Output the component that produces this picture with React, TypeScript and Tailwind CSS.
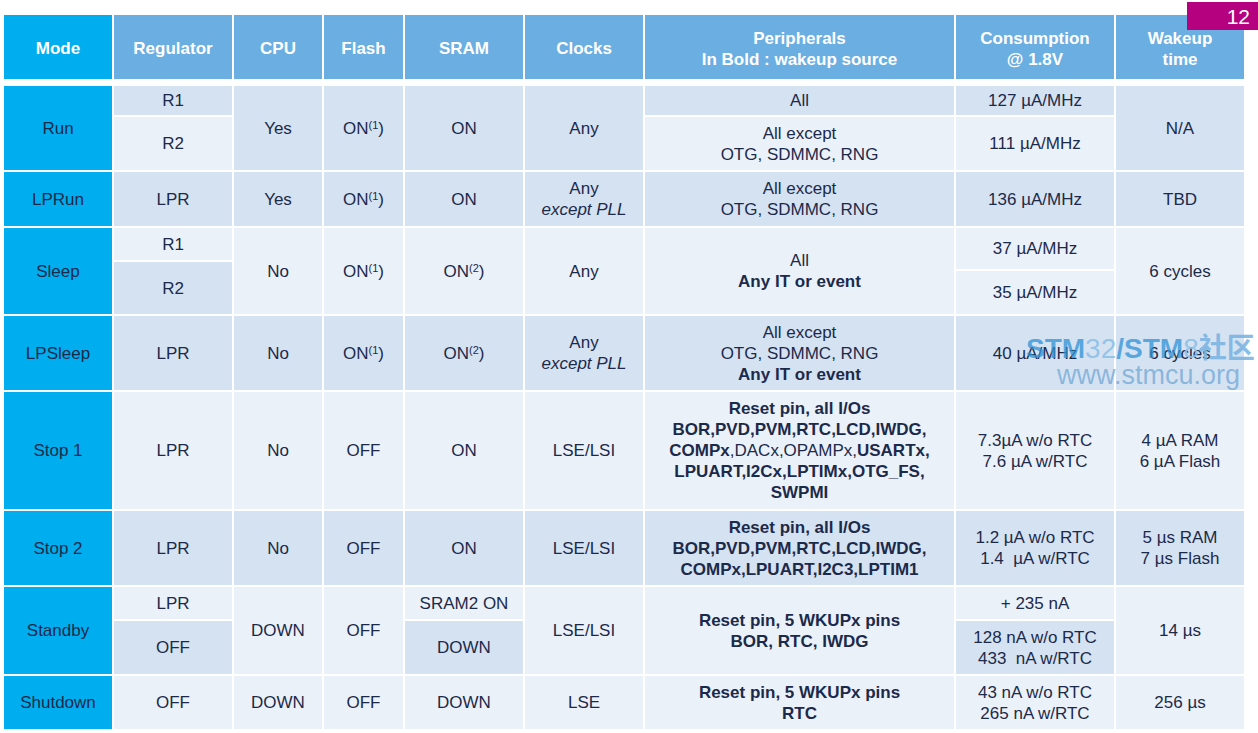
import * as React from "react";

const D = "bg-[#d5e2f2]";
const L = "bg-[#ebf1f9]";
const M = "bg-[#00adef]";

type Cell = { pos: string; bg: string; content: React.ReactNode };

const On = ({ n }: { n: string }) => (
  <span>
    ON<sup className="text-[11px] -top-[0.45em]">({n}</sup>)
  </span>
);

const Lines = ({ children }: { children: React.ReactNode }) => (
  <div className="flex flex-col items-center">{children}</div>
);

const cells: Cell[] = [
  // Mode
  { pos: "col-start-1 row-start-1 row-span-2", bg: M, content: "Run" },
  { pos: "col-start-1 row-start-3", bg: M, content: "LPRun" },
  { pos: "col-start-1 row-start-4 row-span-3", bg: M, content: "Sleep" },
  { pos: "col-start-1 row-start-7", bg: M, content: "LPSleep" },
  { pos: "col-start-1 row-start-8", bg: M, content: "Stop 1" },
  { pos: "col-start-1 row-start-9", bg: M, content: "Stop 2" },
  { pos: "col-start-1 row-start-10 row-span-2", bg: M, content: "Standby" },
  { pos: "col-start-1 row-start-12", bg: M, content: "Shutdown" },

  // Regulator
  { pos: "col-start-2 row-start-1", bg: D, content: "R1" },
  { pos: "col-start-2 row-start-2", bg: L, content: "R2" },
  { pos: "col-start-2 row-start-3", bg: D, content: "LPR" },
  { pos: "col-start-2 row-start-4", bg: L, content: "R1" },
  { pos: "col-start-2 row-start-5 row-span-2", bg: D, content: "R2" },
  { pos: "col-start-2 row-start-7", bg: D, content: "LPR" },
  { pos: "col-start-2 row-start-8", bg: L, content: "LPR" },
  { pos: "col-start-2 row-start-9", bg: D, content: "LPR" },
  { pos: "col-start-2 row-start-10", bg: L, content: "LPR" },
  { pos: "col-start-2 row-start-11", bg: D, content: "OFF" },
  { pos: "col-start-2 row-start-12", bg: L, content: "OFF" },

  // CPU
  { pos: "col-start-3 row-start-1 row-span-2", bg: D, content: "Yes" },
  { pos: "col-start-3 row-start-3", bg: D, content: "Yes" },
  { pos: "col-start-3 row-start-4 row-span-3", bg: L, content: "No" },
  { pos: "col-start-3 row-start-7", bg: D, content: "No" },
  { pos: "col-start-3 row-start-8", bg: L, content: "No" },
  { pos: "col-start-3 row-start-9", bg: D, content: "No" },
  { pos: "col-start-3 row-start-10 row-span-2", bg: L, content: "DOWN" },
  { pos: "col-start-3 row-start-12", bg: L, content: "DOWN" },

  // Flash
  { pos: "col-start-4 row-start-1 row-span-2", bg: D, content: <On n="1" /> },
  { pos: "col-start-4 row-start-3", bg: D, content: <On n="1" /> },
  { pos: "col-start-4 row-start-4 row-span-3", bg: L, content: <On n="1" /> },
  { pos: "col-start-4 row-start-7", bg: D, content: <On n="1" /> },
  { pos: "col-start-4 row-start-8", bg: L, content: "OFF" },
  { pos: "col-start-4 row-start-9", bg: D, content: "OFF" },
  { pos: "col-start-4 row-start-10 row-span-2", bg: L, content: "OFF" },
  { pos: "col-start-4 row-start-12", bg: L, content: "OFF" },

  // SRAM
  { pos: "col-start-5 row-start-1 row-span-2", bg: D, content: "ON" },
  { pos: "col-start-5 row-start-3", bg: D, content: "ON" },
  { pos: "col-start-5 row-start-4 row-span-3", bg: L, content: <On n="2" /> },
  { pos: "col-start-5 row-start-7", bg: D, content: <On n="2" /> },
  { pos: "col-start-5 row-start-8", bg: L, content: "ON" },
  { pos: "col-start-5 row-start-9", bg: D, content: "ON" },
  { pos: "col-start-5 row-start-10", bg: L, content: "SRAM2 ON" },
  { pos: "col-start-5 row-start-11", bg: D, content: "DOWN" },
  { pos: "col-start-5 row-start-12", bg: L, content: "DOWN" },

  // Clocks
  { pos: "col-start-6 row-start-1 row-span-2", bg: D, content: "Any" },
  {
    pos: "col-start-6 row-start-3",
    bg: D,
    content: (
      <Lines>
        <span>Any</span>
        <span className="italic">except PLL</span>
      </Lines>
    ),
  },
  { pos: "col-start-6 row-start-4 row-span-3", bg: L, content: "Any" },
  {
    pos: "col-start-6 row-start-7",
    bg: D,
    content: (
      <Lines>
        <span>Any</span>
        <span className="italic">except PLL</span>
      </Lines>
    ),
  },
  { pos: "col-start-6 row-start-8", bg: L, content: "LSE/LSI" },
  { pos: "col-start-6 row-start-9", bg: D, content: "LSE/LSI" },
  { pos: "col-start-6 row-start-10 row-span-2", bg: L, content: "LSE/LSI" },
  { pos: "col-start-6 row-start-12", bg: L, content: "LSE" },

  // Peripherals
  { pos: "col-start-7 row-start-1", bg: D, content: "All" },
  {
    pos: "col-start-7 row-start-2",
    bg: L,
    content: (
      <Lines>
        <span>All except</span>
        <span>OTG, SDMMC, RNG</span>
      </Lines>
    ),
  },
  {
    pos: "col-start-7 row-start-3",
    bg: D,
    content: (
      <Lines>
        <span>All except</span>
        <span>OTG, SDMMC, RNG</span>
      </Lines>
    ),
  },
  {
    pos: "col-start-7 row-start-4 row-span-3",
    bg: L,
    content: (
      <Lines>
        <span>All</span>
        <span className="font-bold">Any IT or event</span>
      </Lines>
    ),
  },
  {
    pos: "col-start-7 row-start-7",
    bg: D,
    content: (
      <Lines>
        <span>All except</span>
        <span>OTG, SDMMC, RNG</span>
        <span className="font-bold">Any IT or event</span>
      </Lines>
    ),
  },
  {
    pos: "col-start-7 row-start-8",
    bg: L,
    content: (
      <Lines>
        <span className="font-bold">Reset pin, all I/Os</span>
        <span className="font-bold">BOR,PVD,PVM,RTC,LCD,IWDG,</span>
        <span>
          <b>COMPx</b>,DACx,OPAMPx,<b>USARTx,</b>
        </span>
        <span className="font-bold">LPUART,I2Cx,LPTIMx,OTG_FS,</span>
        <span className="font-bold">SWPMI</span>
      </Lines>
    ),
  },
  {
    pos: "col-start-7 row-start-9",
    bg: D,
    content: (
      <Lines>
        <span className="font-bold">Reset pin, all I/Os</span>
        <span className="font-bold">BOR,PVD,PVM,RTC,LCD,IWDG,</span>
        <span className="font-bold">COMPx,LPUART,I2C3,LPTIM1</span>
      </Lines>
    ),
  },
  {
    pos: "col-start-7 row-start-10 row-span-2",
    bg: L,
    content: (
      <Lines>
        <span className="font-bold">Reset pin, 5 WKUPx pins</span>
        <span className="font-bold">BOR, RTC, IWDG</span>
      </Lines>
    ),
  },
  {
    pos: "col-start-7 row-start-12",
    bg: L,
    content: (
      <Lines>
        <span className="font-bold">Reset pin, 5 WKUPx pins</span>
        <span className="font-bold">RTC</span>
      </Lines>
    ),
  },

  // Consumption
  { pos: "col-start-8 row-start-1", bg: D, content: "127 µA/MHz" },
  { pos: "col-start-8 row-start-2", bg: L, content: "111 µA/MHz" },
  { pos: "col-start-8 row-start-3", bg: D, content: "136 µA/MHz" },
  { pos: "col-start-8 row-start-4 row-span-2", bg: L, content: "37 µA/MHz" },
  { pos: "col-start-8 row-start-6", bg: L, content: "35 µA/MHz" },
  { pos: "col-start-8 row-start-7", bg: D, content: "40 µA/MHz" },
  {
    pos: "col-start-8 row-start-8",
    bg: L,
    content: (
      <Lines>
        <span>7.3µA w/o RTC</span>
        <span>7.6 µA w/RTC</span>
      </Lines>
    ),
  },
  {
    pos: "col-start-8 row-start-9",
    bg: D,
    content: (
      <Lines>
        <span>1.2 µA w/o RTC</span>
        <span className="whitespace-pre">1.4  µA w/RTC</span>
      </Lines>
    ),
  },
  { pos: "col-start-8 row-start-10", bg: L, content: "+ 235 nA" },
  {
    pos: "col-start-8 row-start-11",
    bg: D,
    content: (
      <Lines>
        <span>128 nA w/o RTC</span>
        <span className="whitespace-pre">433  nA w/RTC</span>
      </Lines>
    ),
  },
  {
    pos: "col-start-8 row-start-12",
    bg: L,
    content: (
      <Lines>
        <span>43 nA w/o RTC</span>
        <span>265 nA w/RTC</span>
      </Lines>
    ),
  },

  // Wakeup
  { pos: "col-start-9 row-start-1 row-span-2", bg: D, content: "N/A" },
  { pos: "col-start-9 row-start-3", bg: D, content: "TBD" },
  { pos: "col-start-9 row-start-4 row-span-3", bg: L, content: "6 cycles" },
  { pos: "col-start-9 row-start-7", bg: D, content: "6 cycles" },
  {
    pos: "col-start-9 row-start-8",
    bg: L,
    content: (
      <Lines>
        <span>4 µA RAM</span>
        <span>6 µA Flash</span>
      </Lines>
    ),
  },
  {
    pos: "col-start-9 row-start-9",
    bg: D,
    content: (
      <Lines>
        <span>5 µs RAM</span>
        <span>7 µs Flash</span>
      </Lines>
    ),
  },
  { pos: "col-start-9 row-start-10 row-span-2", bg: L, content: "14 µs" },
  { pos: "col-start-9 row-start-12", bg: L, content: "256 µs" },
];

const headers: React.ReactNode[] = [
  "Regulator",
  "CPU",
  "Flash",
  "SRAM",
  "Clocks",
  <Lines key="p">
    <span>Peripherals</span>
    <span>In Bold : wakeup source</span>
  </Lines>,
  <Lines key="c">
    <span>Consumption</span>
    <span>@ 1.8V</span>
  </Lines>,
  <Lines key="w">
    <span>Wakeup</span>
    <span>time</span>
  </Lines>,
];

export default function App() {
  return (
    <div className="relative w-[1258px] h-[733px] overflow-hidden bg-white font-['Liberation_Sans',Arial,sans-serif] text-[17px] leading-[21px] text-[#1c2a4a]">
      <div className="pl-[4px] pt-[15px]">
        <div className="grid grid-cols-[108px_118px_88px_79px_118px_118px_309px_158px_128px] grid-rows-[64px] gap-[2px] font-bold text-white">
          <div className={`${M} flex items-center justify-center pt-[2px]`}>Mode</div>
          {headers.map((h, i) => (
            <div key={i} className="bg-[#6aaee2] flex items-center justify-center text-center pt-[3px]">
              {h}
            </div>
          ))}
        </div>

        <div className="mt-[7px] grid grid-cols-[108px_118px_88px_79px_118px_118px_309px_158px_128px] grid-rows-[29px_53px_54px_32px_7px_43px_74px_117px_74px_32px_53px_53px] gap-[2px]">
          {cells.map((c, i) => (
            <div
              key={i}
              className={`${c.pos} ${c.bg} flex items-center justify-center text-center whitespace-nowrap`}
            >
              {c.content}
            </div>
          ))}
        </div>
      </div>

      {/* slide number */}
      <div className="absolute right-0 top-[2px] w-[71px] h-[28px] bg-[#b5007f] flex items-center justify-end pr-[8px] text-white text-[21px]">
        12
      </div>

      {/* watermark */}
      <div className="absolute left-[1026px] top-[335px] flex flex-col items-start pointer-events-none">
        <div className="text-[28px] leading-[28px] whitespace-nowrap font-['Liberation_Sans','Noto_Sans_CJK_SC',sans-serif]">
          <span className="font-bold text-[#2f93d6]/75">STM</span>
          <span className="text-[#8cc0e8]/90">32</span>
          <span className="font-bold text-[#2f93d6]/75">/STM</span>
          <span className="text-[#8cc0e8]/90">8</span>
          <span className="font-bold text-[#7ab4e2]/90">社区</span>
        </div>
        <div className="ml-[31px] text-[27px] leading-[24px] whitespace-nowrap text-[#6aa3d2]/70">
          www.stmcu.org
        </div>
      </div>
    </div>
  );
}
